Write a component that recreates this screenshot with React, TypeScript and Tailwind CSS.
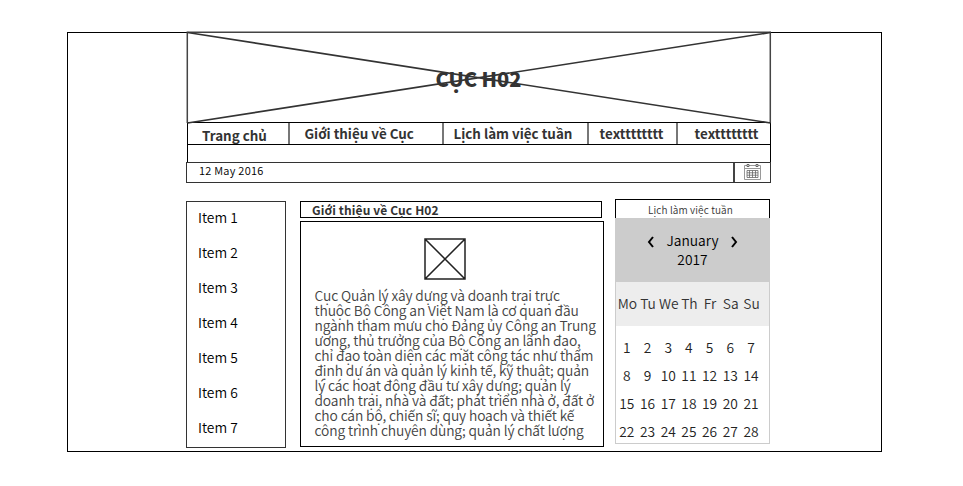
import React from "react";

const weekdays = ["Mo", "Tu", "We", "Th", "Fr", "Sa", "Su"];
const items = ["Item 1", "Item 2", "Item 3", "Item 4", "Item 5", "Item 6", "Item 7"];
const paragraph = [
  "Cục Quản lý xây dựng và doanh trại trực",
  "thuộc Bộ Công an Việt Nam là cơ quan đầu",
  "ngành tham mưu cho Đảng ủy Công an Trung",
  "ương, thủ trưởng của Bộ Công an lãnh đạo,",
  "chỉ đạo toàn diện các mặt công tác như thẩm",
  "định dự án và quản lý kinh tế, kỹ thuật; quản",
  "lý các hoạt động đầu tư xây dựng; quản lý",
  "doanh trại, nhà và đất; phát triển nhà ở, đất ở",
  "cho cán bộ, chiến sĩ; quy hoạch và thiết kế",
  "công trình chuyên dùng; quản lý chất lượng",
];

function Banner() {
  return (
    <div className="-mt-px grid h-[90px] w-[584px]">
      <svg className="col-start-1 row-start-1 overflow-visible" width="584" height="90" fill="none" stroke="#333">
        <path d="M.3 91V.2H583.3V91" strokeWidth="1.5" stroke="#444" />
        <path d="M.5 .5L583.5 91M.5 91L583.5 .5" strokeWidth="1.7" />
      </svg>
      <h1 className="col-start-1 row-start-1 mt-[32px] h-[30px] pr-px text-center text-[20px] leading-[30px] font-black text-[#333]">CỤC H02</h1>
    </div>
  );
}

function CalendarIcon() {
  return (
    <svg className="-mt-[3px]" width="17" height="17" viewBox="0 0 17 17" fill="none" stroke="#999" strokeWidth="1">
      <path d="M.5 2.5H16.5V16.5H.5ZM.5 5.5H16.5" />
      <path d="M3 7.5H14V14.5H3ZM3 9.8H14M3 12.2H14M5.5 7.5V14.5M8.5 7.5V14.5M11.5 7.5V14.5" stroke="#666" strokeWidth=".8" />
      <path d="M3 1.5h2v2h-2zM12 1.5h2v2h-2z" fill="#fff" stroke="#666" />
    </svg>
  );
}

export default function App() {
  return (
    <div className="h-[486px] w-[963px] overflow-hidden bg-white pt-[32px] pl-[67px] font-['Noto_Sans_CJK_SC','Noto_Sans',sans-serif] whitespace-nowrap text-[#333]">
      <div className="h-[420px] w-[815px] border border-black pl-[118px]">
        <header className="ml-px w-[584px]">
          <Banner />
          <nav className="flex h-[23px] border border-black text-[13.4px] leading-[20px] font-bold">
            <div className="w-[102px] border-r-2 border-[#777] pt-[2px] pl-[14px]">Trang chủ</div>
            <div className="w-[154px] border-r-2 border-[#777] pl-[14.5px]">Giới thiệu về Cục</div>
            <div className="w-[145px] border-r-2 border-[#777] pl-[9.5px]">Lịch làm việc tuần</div>
            <div className="w-[89px] border-r-2 border-[#777] pl-[10.5px] tracking-[0.1px]">textttttttt</div>
            <div className="pl-[16.5px] tracking-[0.1px]">textttttttt</div>
          </nav>
          <div className="h-[17px] border-x border-black" />
          <div className="-ml-px flex h-[21px] w-[585px] border-[1.5px] border-[#333] text-[11px] leading-[15px]">
            <div className="w-[548px] border-r-2 border-[#444] pl-[12px] font-[350] tracking-[0.25px] text-black">12 May 2016</div>
            <div className="flex flex-1 items-center justify-center"><CalendarIcon /></div>
          </div>
        </header>
        <main className="mt-[16px] flex items-start">
          <ul className="mt-[2px] h-[247px] w-[100px] border-[1.5px] border-[#333] pl-[11px] text-[13.8px] font-[350] text-black">
            {items.map((item) => <li key={item} className="h-[35px] leading-[31px]">{item}</li>)}
          </ul>
          <section className="mt-[2px] ml-[14px] w-[304px]">
            <h2 className="h-[17px] w-[302px] border border-black pl-[11px] text-[12px] leading-[15px] font-bold tracking-[0.13px]">Giới thiệu về Cục H02</h2>
            <div className="mt-[3px] h-[226px] border border-black pt-[16px] pl-[13.5px]">
              <svg className="ml-[109.5px]" width="42" height="42" fill="none" stroke="#222" strokeWidth="1.5">
                <path d="M1 1H41V41H1ZL41 41M1 41L41 1" />
              </svg>
              <div className="mt-[8px] text-[13.8px] leading-[15px] font-[350] tracking-[-0.13px] text-[#444]">
                {paragraph.map((line) => <p key={line}>{line}</p>)}
              </div>
            </div>
          </section>
          <aside className="ml-[11px] w-[155px]">
            <h2 className="h-[19px] border border-b-0 border-black pr-[4px] text-center text-[10px] leading-[20px] font-[350] tracking-[0.1px]">Lịch làm việc tuần</h2>
            <div className="h-[64px] bg-[#ccc] pt-[13px] text-[13.8px] leading-[19px] font-[350] text-black">
              <div className="flex items-center justify-center">
                <svg className="mt-[2px] mr-[12px]" width="7" height="12" fill="none" stroke="black" strokeWidth="2"><path d="M6 1L2 6L6 11" /></svg>
                January
                <svg className="mt-[2px] ml-[12px]" width="7" height="12" fill="none" stroke="black" strokeWidth="2"><path d="M1 1L5 6L1 11" /></svg>
              </div>
              <div className="text-center">2017</div>
            </div>
            <div className="h-[162px] border border-t-0 border-[#ccc]">
              <div className="grid h-[44px] grid-cols-[repeat(7,20.7px)] bg-[#ededed] pl-[1px] text-center text-[13.8px] leading-[43px] font-[350]">
                {weekdays.map((day) => <div key={day} className="flex justify-center">{day}</div>)}
              </div>
              <div className="grid grid-cols-[repeat(7,20.7px)] pt-[7px] pl-[0.5px] text-center text-[13.8px] leading-[28px] font-[350] text-[#222]">
                {Array.from({ length: 28 }, (_, i) => <div key={i}>{i + 1}</div>)}
              </div>
            </div>
          </aside>
        </main>
      </div>
    </div>
  );
}
